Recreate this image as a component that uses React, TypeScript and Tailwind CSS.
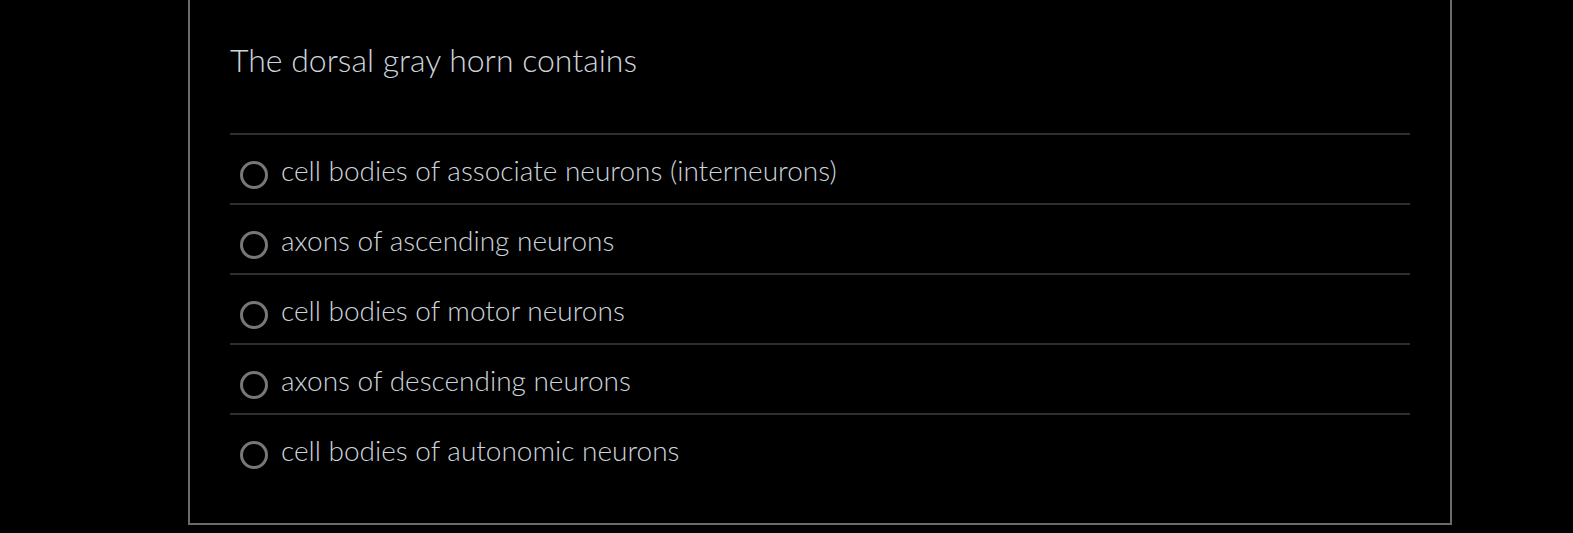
import React from "react";

const options = [
  "cell bodies of associate neurons (interneurons)",
  "axons of ascending neurons",
  "cell bodies of motor neurons",
  "axons of descending neurons",
  "cell bodies of autonomic neurons",
];

export default function App() {
  return (
    <div className="min-h-[533px] bg-black pb-2" style={{ fontFamily: "Lato, 'Open Sans', sans-serif" }}>
      <div className="ml-[188px] w-[1264px] border-2 border-t-0 border-[#6b6b6b] px-[40px] pt-[41px] pb-[40px]">
        <h1 className="text-[32px] leading-[1.2] font-light text-[#cdd4db] mb-[54px]">The dorsal gray horn contains</h1>
        <div>
          {options.map((o) => (
            <label key={o} className="flex items-start border-t-2 border-[#2f2f2f] h-[70px] pt-[26px] cursor-pointer">
              <span className="ml-[10px] w-[28px] h-[28px] rounded-full border-[3px] border-[#777777] shrink-0" />
              <span className="ml-[13px] -mt-[7px] text-[28px] leading-[1.2] font-light text-[#cdd4db]">{o}</span>
            </label>
          ))}
        </div>
      </div>
    </div>
  );
}
